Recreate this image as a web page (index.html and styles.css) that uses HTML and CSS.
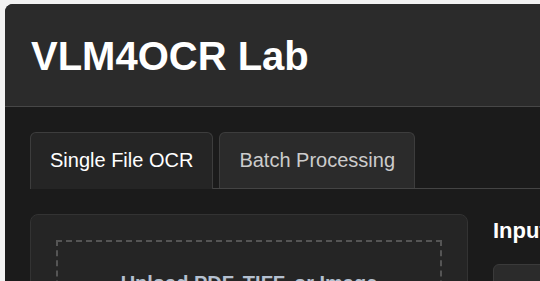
FILE: index.html
```html
<!DOCTYPE html>
<html lang="en">
<head>
<meta charset="utf-8">
<title>VLM4OCR Lab</title>
<link rel="stylesheet" href="styles.css">
</head>
<body>
<div class="app">
  <header class="app-header">
    <h1 class="title">VLM4OCR Lab</h1>
  </header>
  <main class="app-main">
    <nav class="tabs">
      <button class="tab active">Single File OCR</button>
      <button class="tab">Batch Processing</button>
    </nav>
    <section class="layout">
      <div class="card">
        <div class="dropzone">
          <div class="drop-title">Upload PDF, TIFF, or Image</div>
        </div>
      </div>
      <div class="side">
        <h2 class="side-title">Input Settings</h2>
        <div class="field"></div>
      </div>
    </section>
  </main>
</div>
</body>
</html>
```
FILE: styles.css
```css
html, body {
  margin: 0;
  padding: 0;
}
body {
  background: #f2f2f2;
  font-family: "Liberation Sans", Arial, sans-serif;
  overflow: hidden;
  width: 540px;
  height: 281px;
}
.app {
  margin: 4px 0 0 5px;
  width: 1200px;
  border-radius: 8px 8px 0 0;
  overflow: hidden;
  background: #1b1b1b;
}
.app-header {
  background: #2b2b2b;
  padding: 29px 26px 27px;
  border-bottom: 1px solid #474747;
}
.title {
  margin: 0;
  font-size: 40px;
  font-weight: bold;
  color: #ffffff;
  line-height: 46px;
}
.app-main {
  padding: 25px 25px;
}
.tabs {
  display: flex;
  gap: 6px;
  border-bottom: 1px solid #444;
}
.tab {
  font-family: "Liberation Sans", Arial, sans-serif;
  font-size: 20px;
  line-height: 23px;
  padding: 16px 19px;
  background: #2b2b2b;
  color: #cccccc;
  border: 1px solid #3d3d3d;
  border-bottom: none;
  border-radius: 6px 6px 0 0;
}
.tab.active {
  background: #252525;
  color: #ffffff;
  margin-bottom: -1px;
  padding-bottom: 17px;
}
.layout {
  display: grid;
  grid-template-columns: 438px 1fr;
  gap: 25px;
  margin-top: 25px;
}
.card {
  background: #252525;
  border: 1px solid #333;
  border-radius: 8px;
  padding: 25px;
  height: 300px;
}
.dropzone {
  border: 2px dashed #555;
  padding: 30px 20px;
  text-align: center;
}
.drop-title {
  font-size: 20px;
  font-weight: bold;
  line-height: 23px;
  color: #b4c0d0;
}
.side-title {
  margin: 4px 0 0;
  font-size: 22px;
  line-height: 25px;
  font-weight: bold;
  color: #ffffff;
  white-space: nowrap;
}
.field {
  margin-top: 21px;
  height: 40px;
  background: #2b2b2b;
  border: 1px solid #3a3a3a;
  border-radius: 6px;
}
```
